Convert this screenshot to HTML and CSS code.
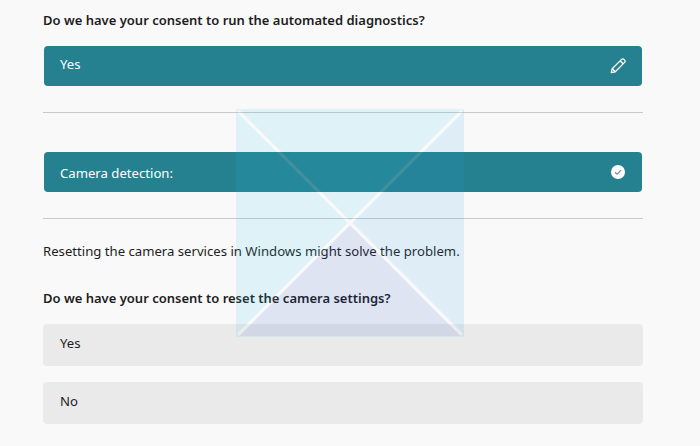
FILE: index.html
```html
<!DOCTYPE html>
<html lang="en">
<head>
<meta charset="utf-8">
<title>Camera diagnostics</title>
<link rel="stylesheet" href="styles.css">
</head>
<body>
<main class="page">
  <p class="question first">Do we have your consent to run the automated diagnostics?</p>
  <div class="choice selected">
    <span class="label">Yes</span>
    <svg class="icon" width="18" height="18" viewBox="0 0 18 18" fill="none" stroke="#fff" stroke-width="1.300" stroke-linejoin="round"><path d="M2.300 15.700l.9-4L12.600 2.400a1.600 1.600 0 0 1 2.300 0l.7.7a1.600 1.600 0 0 1 0 2.300L6.300 14.800z"/><path d="M11.200 3.800l3 3M3.200 11.700l3.100 3.100"/></svg>
  </div>
  <hr class="rule">
  <div class="choice selected second">
    <span class="label low">Camera detection:</span>
    <svg class="icon" width="18" height="18" viewBox="0 0 18 18"><circle cx="9" cy="9" r="7" fill="#fff"/><path d="M6 9.200l2.100 2 4-4" fill="none" stroke="#6f8f98" stroke-width="1.200"/></svg>
  </div>
  <hr class="rule">
  <p class="statement">Resetting the camera services in Windows might solve the problem.</p>
  <p class="question second-q">Do we have your consent to reset the camera settings?</p>
  <div class="choice"><span class="label">Yes</span></div>
  <div class="choice next"><span class="label">No</span></div>
</main>
<svg class="watermark" width="228" height="228" viewBox="0 0 228 228" aria-hidden="true">
  <rect width="228" height="228" fill="#2ac8f0"/>
  <polygon points="114,114 228,228 228,0" fill="#2a9ee9"/>
  <polygon points="114,114 228,228 0,228" fill="#2a53d0"/>
  <path d="M2 2L226 226M226 2L2 226" stroke="#fff" stroke-width="3.200"/>
  <path d="M0 227.500H228" stroke="#2ac8f0" stroke-width="1"/>
</svg>
</body>
</html>
```
FILE: styles.css
```css
html, body { margin: 0; padding: 0; }
body {
  width: 700px;
  height: 446px;
  overflow: hidden;
  position: relative;
  background: #f9f9f9;
  color: #1d1d1d;
  font-family: "Noto Sans", "Open Sans", sans-serif;
  font-size: 13.15px;
}
.page { width: 600px; margin-left: 43px; padding-top: 11px; }
p { margin: 0; line-height: 18px; }
.question { font-size: 13px; font-weight: 600; }
.first { margin-bottom: 16px; line-height: 18px; }
.statement { margin-top: 23px; }
.second-q { margin-top: 29px; margin-bottom: 17px; }
.choice {
  box-sizing: border-box;
  height: 42px;
  padding: 0 17px;
  display: flex;
  align-items: center;
  justify-content: space-between;
  background: #eaeaea;
  border-radius: 4px;
}
.label { display: block; padding-bottom: 4px; }
.low { padding-bottom: 0; padding-top: 2px; }
.selected {
  background: #25808f;
  background-clip: padding-box;
  border: 1px solid transparent;
  border-radius: 5px;
  color: #fff;
  padding: 0 15px 0 16px;
}
.next { margin-top: 16px; }
.rule { margin: 25px 0 0; border: 0; border-top: 1px solid #c9c9c9; }
.second { margin-top: 38px; }
.watermark { position: absolute; left: 236px; top: 109px; opacity: .12; pointer-events: none; }
```
